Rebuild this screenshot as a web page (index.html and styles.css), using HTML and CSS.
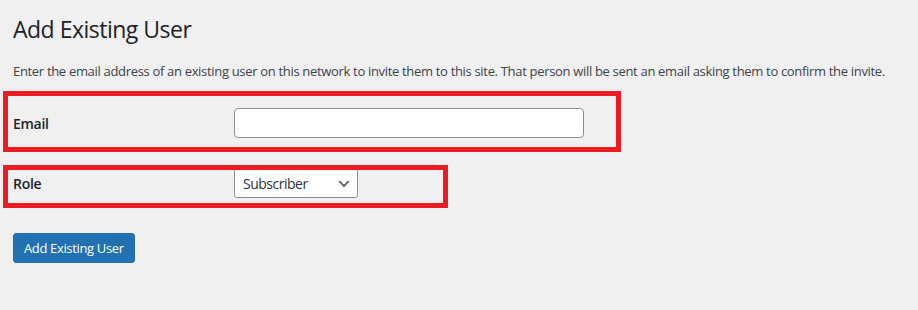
FILE: index.html
```html
<!DOCTYPE html>
<html lang="en">
<head>
<meta charset="utf-8">
<title>Add Existing User</title>
<link rel="stylesheet" href="styles.css">
</head>
<body>
<div class="wrap">
  <h1 class="title">Add Existing User</h1>
  <p class="intro">Enter the email address of an existing user on this network to invite them to this site. That person will be sent an email asking them to confirm the invite.</p>
  <form class="form">
    <div class="row row-email">
      <label class="label" for="email">Email</label>
      <div class="field"><input class="text-input" type="text" id="email"></div>
    </div>
    <div class="row row-role">
      <label class="label" for="role">Role</label>
      <div class="field">
        <span class="select-wrap">
          <select class="select" id="role">
            <option>Subscriber</option>
          </select>
          <svg class="chevron" width="16" height="16" viewBox="0 0 20 20" aria-hidden="true"><path d="M5 6l5 5 5-5 2 1-7 7-7-7 2-1z" fill="#50575e"/></svg>
        </span>
      </div>
    </div>
    <div class="submit">
      <button type="button" class="button-primary">Add Existing User</button>
    </div>
  </form>
</div>
</body>
</html>
```

FILE: styles.css
```css
html, body {
  margin: 0;
  padding: 0;
}
body {
  background: #f0f0f1;
  color: #3c434a;
  font-family: "Open Sans", "Noto Sans", sans-serif;
  font-size: 13px;
}
.wrap {
  padding: 0 13px;
}
.title {
  margin: 0;
  padding: 14px 0 0;
  font-size: 23px;
  font-weight: 400;
  line-height: 30px;
  letter-spacing: -0.5px;
  color: #1d2327;
}
.intro {
  margin: 18px 0 0;
  line-height: 18px;
  font-size: 13px;
  letter-spacing: -0.32px;
  white-space: nowrap;
}
.form {
  margin-top: 13px;
}
.row {
  position: relative;
  display: grid;
  grid-template-columns: 221px 1fr;
  align-items: center;
  padding: 15px 0;
}
.row::after {
  content: "";
  position: absolute;
  border: 5px solid #ed1c24;
  pointer-events: none;
}
.row-email::after {
  left: -10px;
  top: -2px;
  width: 608px;
  height: 51px;
}
.row-role::after {
  left: -10px;
  top: 12px;
  width: 435px;
  height: 33px;
}
.label {
  font-size: 14px;
  font-weight: 600;
  letter-spacing: -0.3px;
  color: #1d2327;
}
.field {
  display: flex;
}
.text-input {
  box-sizing: border-box;
  width: 350px;
  height: 30px;
  margin: 0;
  padding: 0 8px;
  border: 1px solid #8c8f94;
  border-radius: 4px;
  background: #fff;
  font: inherit;
  font-size: 14px;
  color: #2c3338;
}
.select-wrap {
  position: relative;
  display: inline-flex;
}
.select {
  box-sizing: border-box;
  -webkit-appearance: none;
  appearance: none;
  width: 124px;
  height: 30px;
  margin: 0;
  padding: 0 24px 0 8px;
  border: 1px solid #8c8f94;
  border-radius: 3px;
  background: #fff;
  font-family: inherit;
  font-size: 14px;
  letter-spacing: -0.5px;
  color: #2c3338;
}
.chevron {
  position: absolute;
  right: 6px;
  top: 8px;
  pointer-events: none;
}
.submit {
  margin-top: 20px;
}
.button-primary {
  box-sizing: border-box;
  height: 30px;
  margin: 0;
  padding: 0 10px;
  border: 1px solid #2271b1;
  border-radius: 3px;
  background: #2271b1;
  color: #fff;
  font-family: inherit;
  font-size: 13px;
  letter-spacing: -0.35px;
  line-height: 28px;
  cursor: pointer;
}
```
